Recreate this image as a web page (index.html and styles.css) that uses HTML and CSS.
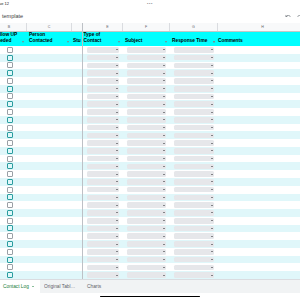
FILE: index.html
```html
<!DOCTYPE html>
<html>
<head>
<meta charset="utf-8">
<link rel="stylesheet" href="styles.css">
</head>
<body>
<div class="status"><span class="time">ue 12</span><span class="dots">•••</span><span></span></div>
<div class="titlebar">
  <span class="title">template</span>
  <span class="icons">
    <svg viewBox="0 0 24 24" width="6" height="6"><path d="M12.5 8c-2.65 0-5.05.99-6.9 2.6L2 7v9h9l-3.62-3.62c1.39-1.16 3.16-1.88 5.12-1.88 3.54 0 6.55 2.31 7.6 5.5l2.37-.78C21.080 11.03 17.15 8 12.5 8z" fill="#80868b"/></svg>
    <svg viewBox="0 0 24 24" width="6" height="6"><path d="M18.4 10.6C16.55 8.99 14.15 8 11.5 8c-4.65 0-8.58 3.03-9.96 7.22L3.9 16c1.05-3.19 4.05-5.5 7.6-5.5 1.950 0 3.73.72 5.12 1.88L13 16h9V7l-3.6 3.6z" fill="#80868b"/></svg>
  </span>
</div>
<div class="sheet">
  <div class="row letters"><div>B</div><div>C</div><div class="d"></div><div class="le">E</div><div>F</div><div>G</div><div>H</div></div>
  <div class="row head">
    <div><span>Follow UP<br>Needed</span><i class="filter"></i></div>
    <div><span>Person<br>Contacted</span><i class="filter"></i></div>
    <div class="d"><span>Stu</span></div>
    <div class="he"><span>Type of<br>Contact</span><i class="filter"></i></div>
    <div><span>Subject</span><i class="filter"></i></div>
    <div><span>Response Time</span><i class="filter"></i></div>
    <div class="hh"><i class="filter"></i><span>Comments</span></div>
  </div>
  <div class="row"><div class="cb"><i></i></div><div></div><div class="d"></div><div class="dd"><span class="chip"></span></div><div class="dd"><span class="chip"></span></div><div class="dd"><span class="chip"></span></div><div></div></div>
  <div class="row alt"><div class="cb"><i></i></div><div></div><div class="d"></div><div class="dd"><span class="chip"></span></div><div class="dd"><span class="chip"></span></div><div class="dd"><span class="chip"></span></div><div></div></div>
  <div class="row"><div class="cb"><i></i></div><div></div><div class="d"></div><div class="dd"><span class="chip"></span></div><div class="dd"><span class="chip"></span></div><div class="dd"><span class="chip"></span></div><div></div></div>
  <div class="row alt"><div class="cb"><i></i></div><div></div><div class="d"></div><div class="dd"><span class="chip"></span></div><div class="dd"><span class="chip"></span></div><div class="dd"><span class="chip"></span></div><div></div></div>
  <div class="row"><div class="cb"><i></i></div><div></div><div class="d"></div><div class="dd"><span class="chip"></span></div><div class="dd"><span class="chip"></span></div><div class="dd"><span class="chip"></span></div><div></div></div>
  <div class="row alt"><div class="cb"><i></i></div><div></div><div class="d"></div><div class="dd"><span class="chip"></span></div><div class="dd"><span class="chip"></span></div><div class="dd"><span class="chip"></span></div><div></div></div>
  <div class="row"><div class="cb"><i></i></div><div></div><div class="d"></div><div class="dd"><span class="chip"></span></div><div class="dd"><span class="chip"></span></div><div class="dd"><span class="chip"></span></div><div></div></div>
  <div class="row alt"><div class="cb"><i></i></div><div></div><div class="d"></div><div class="dd"><span class="chip"></span></div><div class="dd"><span class="chip"></span></div><div class="dd"><span class="chip"></span></div><div></div></div>
  <div class="row"><div class="cb"><i></i></div><div></div><div class="d"></div><div class="dd"><span class="chip"></span></div><div class="dd"><span class="chip"></span></div><div class="dd"><span class="chip"></span></div><div></div></div>
  <div class="row alt"><div class="cb"><i></i></div><div></div><div class="d"></div><div class="dd"><span class="chip"></span></div><div class="dd"><span class="chip"></span></div><div class="dd"><span class="chip"></span></div><div></div></div>
  <div class="row"><div class="cb"><i></i></div><div></div><div class="d"></div><div class="dd"><span class="chip"></span></div><div class="dd"><span class="chip"></span></div><div class="dd"><span class="chip"></span></div><div></div></div>
  <div class="row alt"><div class="cb"><i></i></div><div></div><div class="d"></div><div class="dd"><span class="chip"></span></div><div class="dd"><span class="chip"></span></div><div class="dd"><span class="chip"></span></div><div></div></div>
  <div class="row"><div class="cb"><i></i></div><div></div><div class="d"></div><div class="dd"><span class="chip"></span></div><div class="dd"><span class="chip"></span></div><div class="dd"><span class="chip"></span></div><div></div></div>
  <div class="row alt"><div class="cb"><i></i></div><div></div><div class="d"></div><div class="dd"><span class="chip"></span></div><div class="dd"><span class="chip"></span></div><div class="dd"><span class="chip"></span></div><div></div></div>
  <div class="row"><div class="cb"><i></i></div><div></div><div class="d"></div><div class="dd"><span class="chip"></span></div><div class="dd"><span class="chip"></span></div><div class="dd"><span class="chip"></span></div><div></div></div>
  <div class="row alt"><div class="cb"><i></i></div><div></div><div class="d"></div><div class="dd"><span class="chip"></span></div><div class="dd"><span class="chip"></span></div><div class="dd"><span class="chip"></span></div><div></div></div>
  <div class="row"><div class="cb"><i></i></div><div></div><div class="d"></div><div class="dd"><span class="chip"></span></div><div class="dd"><span class="chip"></span></div><div class="dd"><span class="chip"></span></div><div></div></div>
  <div class="row alt"><div class="cb"><i></i></div><div></div><div class="d"></div><div class="dd"><span class="chip"></span></div><div class="dd"><span class="chip"></span></div><div class="dd"><span class="chip"></span></div><div></div></div>
  <div class="row"><div class="cb"><i></i></div><div></div><div class="d"></div><div class="dd"><span class="chip"></span></div><div class="dd"><span class="chip"></span></div><div class="dd"><span class="chip"></span></div><div></div></div>
  <div class="row alt"><div class="cb"><i></i></div><div></div><div class="d"></div><div class="dd"><span class="chip"></span></div><div class="dd"><span class="chip"></span></div><div class="dd"><span class="chip"></span></div><div></div></div>
  <div class="row"><div class="cb"><i></i></div><div></div><div class="d"></div><div class="dd"><span class="chip"></span></div><div class="dd"><span class="chip"></span></div><div class="dd"><span class="chip"></span></div><div></div></div>
  <div class="row alt"><div class="cb"><i></i></div><div></div><div class="d"></div><div class="dd"><span class="chip"></span></div><div class="dd"><span class="chip"></span></div><div class="dd"><span class="chip"></span></div><div></div></div>
  <div class="row"><div class="cb"><i></i></div><div></div><div class="d"></div><div class="dd"><span class="chip"></span></div><div class="dd"><span class="chip"></span></div><div class="dd"><span class="chip"></span></div><div></div></div>
  <div class="row alt"><div class="cb"><i></i></div><div></div><div class="d"></div><div class="dd"><span class="chip"></span></div><div class="dd"><span class="chip"></span></div><div class="dd"><span class="chip"></span></div><div></div></div>
  <div class="row"><div class="cb"><i></i></div><div></div><div class="d"></div><div class="dd"><span class="chip"></span></div><div class="dd"><span class="chip"></span></div><div class="dd"><span class="chip"></span></div><div></div></div>
  <div class="row alt"><div class="cb"><i></i></div><div></div><div class="d"></div><div class="dd"><span class="chip"></span></div><div class="dd"><span class="chip"></span></div><div class="dd"><span class="chip"></span></div><div></div></div>
  <div class="row"><div class="cb"><i></i></div><div></div><div class="d"></div><div class="dd"><span class="chip"></span></div><div class="dd"><span class="chip"></span></div><div class="dd"><span class="chip"></span></div><div></div></div>
  <div class="row alt"><div class="cb"><i></i></div><div></div><div class="d"></div><div class="dd"><span class="chip"></span></div><div class="dd"><span class="chip"></span></div><div class="dd"><span class="chip"></span></div><div></div></div>
  <div class="row"><div class="cb"><i></i></div><div></div><div class="d"></div><div class="dd"><span class="chip"></span></div><div class="dd"><span class="chip"></span></div><div class="dd"><span class="chip"></span></div><div></div></div>
  <div class="row alt"><div class="cb"><i></i></div><div></div><div class="d"></div><div class="dd"><span class="chip"></span></div><div class="dd"><span class="chip"></span></div><div class="dd"><span class="chip"></span></div><div></div></div>
</div>
<div class="tabs">
  <div class="tab active"><span>Contact Log</span><i class="caret"></i></div>
  <div class="tab t2"><span class="clip">Original Table Data</span></div>
  <div class="tab t3"><span>Charts</span></div>
</div>
<div class="home"><span class="bar"></span></div>
</body>
</html>
```
FILE: styles.css
```css
* { box-sizing: border-box; margin: 0; padding: 0; }
html, body { margin: 0; }
body {
  width: 300px;
  height: 300px;
  overflow: hidden;
  background: #fff;
  color: #202124;
  font-family: "Liberation Sans", Arial, sans-serif;
}
i { font-style: normal; display: block; }

.status {
  height: 8px;
  display: grid;
  grid-template-columns: 1fr auto 1fr;
  align-items: center;
  font-size: 4px;
  line-height: 4px;
}
.time { margin-left: -1px; color: #202124; }
.dots { color: #80868b; letter-spacing: 0.6px; font-size: 4px; }

.titlebar {
  height: 15px;
  display: flex;
  align-items: center;
  justify-content: space-between;
  padding-left: 2px;
}
.title { font-size: 5.5px; color: #3c4043; }
.icons { display: flex; gap: 6px; margin-right: -3px; }
.icons svg { display: block; }

.sheet { margin-left: -8px; width: 316px; }
.row {
  display: grid;
  grid-template-columns: 35px 45px 11px 40px 47px 48px 90px;
  height: 7.77px;
}
.row > div { overflow: hidden; min-width: 0; }
.row > .d { border-right: 1.5px solid #bdc1c6; }
.row.alt { background: #e0f7fa; }

.letters {
  height: 9px;
  background: #f8f9fa;
  border-bottom: 1px solid #c4c7c5;
  font-size: 3.6px;
  color: #5f6368;
}
.letters > div {
  display: flex;
  align-items: center;
  justify-content: center;
  border-right: 1px solid #dadce0;
}
.letters > .d { border-right: 1.5px solid #bdc1c6; }
.letters > .le { padding-left: 10px; }

.head { height: 14px; background: #00ffff; }
.head > div {
  display: flex;
  align-items: flex-end;
  justify-content: space-between;
  padding: 0 3px 1.5px 2px;
  font-weight: bold;
  font-size: 4.8px;
  line-height: 6.3px;
  color: #000;
  white-space: nowrap;
}
.head > .he { padding-left: 0.5px; }
.head > .hh { justify-content: flex-start; gap: 3px; padding-left: 0; margin-left: -5px; overflow: visible; }
.head > .d { padding-left: 1px; }
.filter {
  width: 0;
  height: 0;
  border-left: 1.6px solid transparent;
  border-right: 1.6px solid transparent;
  border-top: 2px solid #80868b;
  margin-bottom: 2px;
  flex: none;
}

.cb {
  display: flex;
  align-items: center;
  justify-content: center;
  padding-left: 1.5px;
}
.cb i {
  width: 6px;
  height: 6px;
  border: 1px solid #9aa0a6;
  border-radius: 1px;
}
.alt .cb i { border-color: #2a9d9f; }

.dd {
  display: flex;
  align-items: center;
  padding: 0 4px 0 3.5px;
}
.chip {
  flex: 1;
  height: 5.6px;
  background: #e6e7ea;
  border-radius: 1.5px;
  display: flex;
  align-items: center;
  justify-content: flex-end;
  padding-right: 1.5px;
}
.chip::after {
  content: "";
  width: 0;
  height: 0;
  border-left: 1.3px solid transparent;
  border-right: 1.3px solid transparent;
  border-top: 1.6px solid #202124;
}

.tabs {
  height: 14px;
  background: #f1f3f4;
  border-top: 0.5px solid #dadce0;
  display: flex;
  font-size: 4.8px;
  color: #5f6368;
}
.tab { display: flex; align-items: center; white-space: nowrap; }
.tab.active { width: 40px; background: #fff; color: #188038; padding-left: 3px; gap: 3px; }
.caret {
  width: 0;
  height: 0;
  border-left: 1.4px solid transparent;
  border-right: 1.4px solid transparent;
  border-top: 1.8px solid #188038;
}
.t2 { width: 42px; padding-left: 4px; }
.clip { display: block; max-width: 33px; overflow: hidden; text-overflow: ellipsis; }
.t3 { padding-left: 5px; }

.home {
  height: 7px;
  display: flex;
  align-items: center;
  justify-content: center;
}
.bar { display: block; width: 100px; height: 1.5px; background: #000; border-radius: 1px; }
```
